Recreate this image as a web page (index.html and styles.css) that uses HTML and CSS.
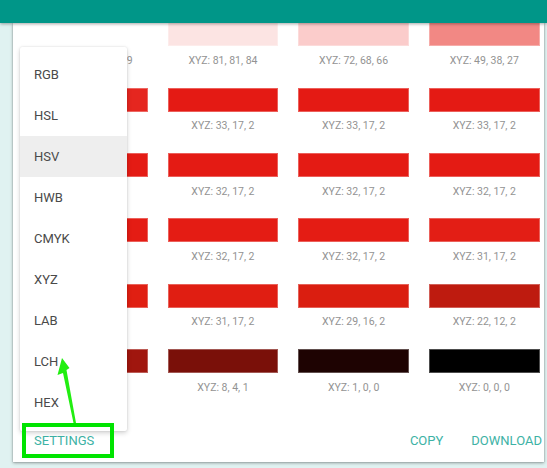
FILE: index.html
```html
<!DOCTYPE html>
<html>
<head>
<meta charset="utf-8">
<link rel="stylesheet" href="styles.css">
</head>
<body>
<div class="screen">
  <header class="appbar"></header>
  <div class="dialog">
    <div class="content">
      <div class="grid">
        <div class="cell"><div class="swatch" style="background:#ffffff"></div><div class="label">XYZ: 95, 100, 109</div></div>
        <div class="cell"><div class="swatch" style="background:#fce4e3"></div><div class="label">XYZ: 81, 81, 84</div></div>
        <div class="cell"><div class="swatch" style="background:#fbcccb"></div><div class="label">XYZ: 72, 68, 66</div></div>
        <div class="cell"><div class="swatch" style="background:#f28884"></div><div class="label">XYZ: 49, 38, 27</div></div>

        <div class="cell"><div class="swatch" style="background:#e5261f"></div><div class="label">XYZ: 33, 17, 2</div></div>
        <div class="cell"><div class="swatch" style="background:#e41a14"></div><div class="label">XYZ: 33, 17, 2</div></div>
        <div class="cell"><div class="swatch" style="background:#e41a14"></div><div class="label">XYZ: 33, 17, 2</div></div>
        <div class="cell"><div class="swatch" style="background:#e41a14"></div><div class="label">XYZ: 33, 17, 2</div></div>

        <div class="cell"><div class="swatch" style="background:#e41b14"></div><div class="label">XYZ: 32, 17, 2</div></div>
        <div class="cell"><div class="swatch" style="background:#e41b14"></div><div class="label">XYZ: 32, 17, 2</div></div>
        <div class="cell"><div class="swatch" style="background:#e41b14"></div><div class="label">XYZ: 32, 17, 2</div></div>
        <div class="cell"><div class="swatch" style="background:#e41b14"></div><div class="label">XYZ: 32, 17, 2</div></div>

        <div class="cell"><div class="swatch" style="background:#e41c14"></div><div class="label">XYZ: 32, 17, 2</div></div>
        <div class="cell"><div class="swatch" style="background:#e41c14"></div><div class="label">XYZ: 32, 17, 2</div></div>
        <div class="cell"><div class="swatch" style="background:#e41c14"></div><div class="label">XYZ: 32, 17, 2</div></div>
        <div class="cell"><div class="swatch" style="background:#e31e15"></div><div class="label">XYZ: 31, 17, 2</div></div>

        <div class="cell"><div class="swatch" style="background:#e01f12"></div><div class="label">XYZ: 31, 17, 2</div></div>
        <div class="cell"><div class="swatch" style="background:#e01e12"></div><div class="label">XYZ: 31, 17, 2</div></div>
        <div class="cell"><div class="swatch" style="background:#da1e10"></div><div class="label">XYZ: 29, 16, 2</div></div>
        <div class="cell"><div class="swatch" style="background:#be1b0f"></div><div class="label">XYZ: 22, 12, 2</div></div>

        <div class="cell"><div class="swatch" style="background:#a0160e"></div><div class="label">XYZ: 14, 7, 1</div></div>
        <div class="cell"><div class="swatch" style="background:#7a1009"></div><div class="label">XYZ: 8, 4, 1</div></div>
        <div class="cell"><div class="swatch" style="background:#1e0302"></div><div class="label">XYZ: 1, 0, 0</div></div>
        <div class="cell"><div class="swatch" style="background:#000000"></div><div class="label">XYZ: 0, 0, 0</div></div>
      </div>
    </div>
    <div class="actions">
      <span class="btn settings">SETTINGS</span>
      <span class="spacer"></span>
      <span class="btn">COPY</span>
      <span class="btn">DOWNLOAD</span>
    </div>
    <ul class="menu">
      <li class="item">RGB</li>
      <li class="item">HSL</li>
      <li class="item active">HSV</li>
      <li class="item">HWB</li>
      <li class="item">CMYK</li>
      <li class="item">XYZ</li>
      <li class="item">LAB</li>
      <li class="item">LCH</li>
      <li class="item">HEX</li>
    </ul>
  </div>
  <svg class="annot" width="547" height="468" viewBox="0 0 547 468">
    <rect x="24" y="425" width="88" height="31" fill="none" stroke="#00e400" stroke-width="4"/>
    <polygon points="62,358 69.5,368 66.5,370 76,423 73.5,423 63,373 57.5,375" fill="#22ee11"/>
  </svg>
</div>
</body>
</html>
```

FILE: styles.css
```css
* { box-sizing: border-box; }
html, body {
  margin: 0;
  padding: 0;
  background: #e0f2f1;
  font-family: Roboto, "Liberation Sans", Arial, sans-serif;
}
.screen {
  position: relative;
  width: 547px;
  height: 468px;
  overflow: hidden;
}
.appbar {
  position: relative;
  z-index: 2;
  height: 23px;
  background: #009688;
  box-shadow: 0 1px 3px rgba(0, 0, 0, 0.35);
}
.dialog {
  position: relative;
  z-index: 1;
  margin-left: 13px;
  width: 531px;
  height: 439px;
  background: #ffffff;
  box-shadow: 0 1px 3px rgba(0, 0, 0, 0.35), 0 0 1px rgba(0, 0, 0, 0.3);
  display: flex;
  flex-direction: column;
}
.content {
  height: 400px;
  overflow: hidden;
}
.grid {
  margin-top: -0.7px;
  padding: 0 3px 0 24px;
  display: grid;
  grid-template-columns: repeat(4, 110.5px);
  column-gap: 20.2px;
}
.cell {
  height: 65.4px;
}
.swatch {
  height: 24px;
  box-shadow: inset 0 0 0 1px rgba(255, 255, 255, 0.3);
}
.label {
  margin-top: 7.5px;
  line-height: 14px;
  font-size: 10.5px;
  color: #939393;
  text-align: center;
  white-space: nowrap;
}
.actions {
  height: 36px;
  display: flex;
  align-items: center;
  padding: 0 2px 0 21px;
  gap: 28px;
}
.spacer { flex: 1; }
.btn {
  font-size: 13px;
  color: #3db2a5;
  line-height: 16px;
}
.menu {
  position: absolute;
  left: 7px;
  top: 24px;
  width: 107px;
  margin: 0;
  padding: 7px 0 8px;
  list-style: none;
  background: #ffffff;
  border-radius: 2px;
  box-shadow: 0 2px 5px rgba(0, 0, 0, 0.18), 0 0 2px rgba(0, 0, 0, 0.12);
}
.item {
  height: 41px;
  line-height: 41px;
  padding-left: 14px;
  font-size: 13px;
  color: #4a4a4a;
}
.item.active {
  background: #eeeeee;
}
.annot {
  position: absolute;
  left: 0;
  top: 0;
  z-index: 5;
  pointer-events: none;
}
```
